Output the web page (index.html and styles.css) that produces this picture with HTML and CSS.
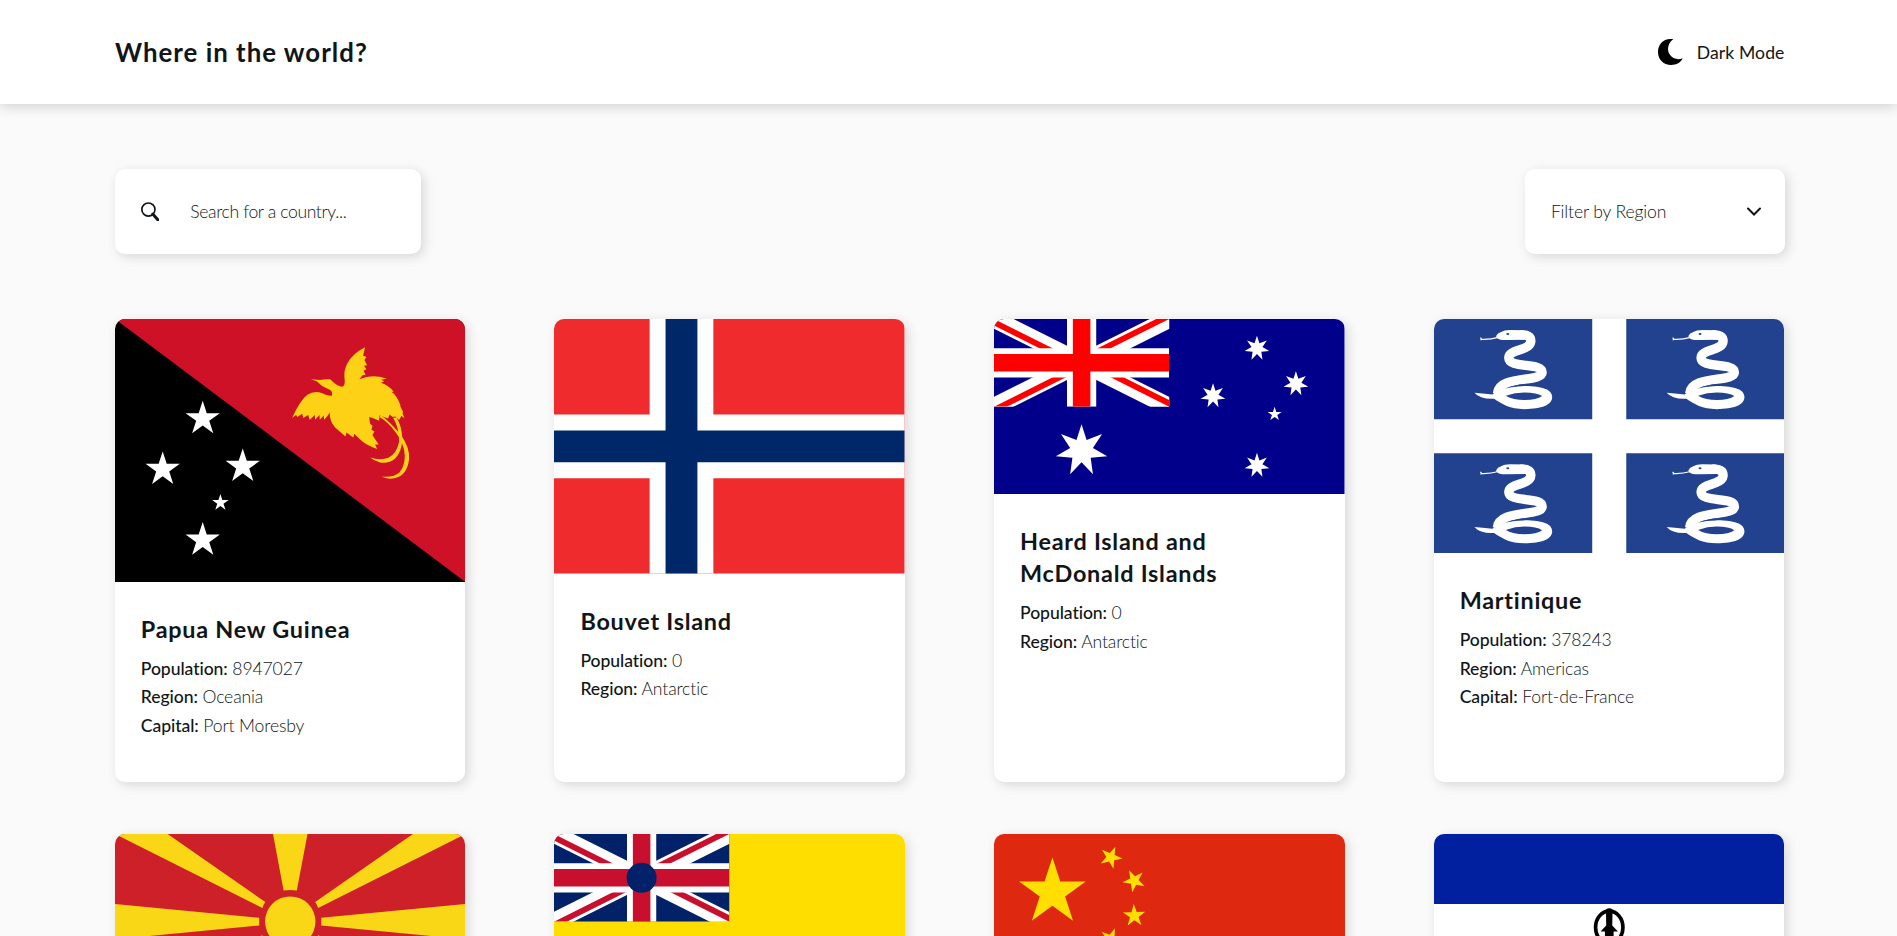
FILE: index.html
```html
<!DOCTYPE html>
<html lang="en">
<head>
<meta charset="utf-8">
<title>Where in the world?</title>
<link rel="stylesheet" href="styles.css">
</head>
<body>
<svg class="defs" aria-hidden="true">
  <defs>
    <polygon id="star5" points="0,-1 .2245,-.309 .951,-.309 .363,.118 .588,.809 0,.382 -.588,.809 -.363,.118 -.951,-.309 -.2245,-.309"/>
    <polygon id="star7" points="0,-1 .193,-.4 .782,-.623 .433,-.099 .975,.223 .347,.277 .434,.901 0,.444 -.434,.901 -.347,.277 -.975,.223 -.433,-.099 -.782,-.623 -.193,-.4"/>
    <clipPath id="saltire"><path d="M30,15h30v15zM30,15v15H0zM30,15H0V0zM30,15V0h30z"/></clipPath>
    <clipPath id="canton"><path d="M0,0h60v30H0z"/></clipPath>
    <g id="union" clip-path="url(#canton)">
      <path d="M0,0L60,30M60,0L0,30" stroke="#fff" stroke-width="6"/>
      <path d="M0,0L60,30M60,0L0,30" stroke="currentColor" stroke-width="4" clip-path="url(#saltire)"/>
      <path d="M30,0v30M0,15h60" stroke="#fff" stroke-width="10"/>
      <path d="M30,0v30M0,15h60" stroke="currentColor" stroke-width="6"/>
    </g>
    <g id="snake">
      <path d="M300,75C322,73 333,80 332,94C330,123 266,117 266,143C266,176 366,156 366,187C365,218 236,194 232,250" fill="none" stroke="#fff" stroke-width="28"/>
      <path d="M228,78Q232,69 243,66Q252,60 270,60L312,61L314,89L262,90Q240,91 234,86Q228,83 228,78z" fill="#fff"/>
      <path d="M163,248Q185,250 217,253C235,238 270,228 313,228C370,228 396,240 396,261C396,285 365,297 313,297C270,297 245,282 222,266Q180,268 163,248z" fill="#fff"/>
      <path d="M257,257Q285,247 313,247Q350,247 366,258Q350,270 313,270Q280,270 257,257zM255,237Q275,226 312,222L312,228Q275,229 255,237z" fill="#22428f"/>
      <path d="M181,83L185,88L181,90L185,88Q210,89 235,82" fill="none" stroke="#fff" stroke-width="3.500"/>
      <ellipse cx="263" cy="72" rx="4.500" ry="3" fill="#22428f"/>
    </g>
  </defs>
</svg>

<header class="header">
  <h1 class="logo">Where in the world?</h1>
  <button class="mode" type="button">
    <svg class="moon" viewBox="0 0 75 78"><path d="M46,1C18,-4 0,15 0,39C0,62 17,78 39,78C55,78 69,71 74,58C49,67 31,50 30,31C30,18 36,7 46,1z"/></svg>
    <span>Dark Mode</span>
  </button>
</header>

<main class="main">
  <div class="controls">
    <label class="search">
      <svg class="search-icon" viewBox="0 0 55 58"><circle cx="22" cy="22.500" r="19.500" fill="none" stroke="#111517" stroke-width="5"/><path d="M35,36L50,53" fill="none" stroke="#111517" stroke-width="9" stroke-linecap="round"/></svg>
      <span>Search for a country...</span>
    </label>
    <div class="filter">
      <span>Filter by Region</span>
      <svg class="chevron" viewBox="0 0 42 26"><path d="M3,4L21,22L39,4" fill="none" stroke="#111517" stroke-width="6" stroke-linecap="round" stroke-linejoin="miter"/></svg>
    </div>
  </div>

  <section class="grid">
    <article class="card">
      <svg class="flag" viewBox="45 27 1051 788.500">
        <path d="M45,27h1051v789H45z" fill="#000"/>
        <path d="M45,27h1051v789z" fill="#ce1126"/>
        <g fill="#fff">
          <use href="#star5" transform="translate(308 326) scale(54)"/>
          <use href="#star5" transform="translate(188 478) scale(54)"/>
          <use href="#star5" transform="translate(428 469) scale(54)"/>
          <use href="#star5" transform="translate(361 578) scale(26)"/>
          <use href="#star5" transform="translate(308 690) scale(54)"/>
        </g>
        <g transform="translate(540 75)" fill="#fcd116">
          <path d="M92,133L120,135Q135,131 150,133L160,142Q172,154 187,155Q194,152 194,138Q189,108 202,85Q217,56 255,37L249,62L259,66L253,75L261,91L252,92L259,103L250,107L257,119L248,120L238,133Q275,116 320,131L303,134L312,139L303,143Q325,150 341,170L334,170Q350,180 362,213L359,211L369,231L367,234L373,250L364,242L357,255L345,244L338,246L328,238L324,250L298,241L297,257L281,250L267,246L270,266L277,272L274,284L283,289L277,300L286,314L296,328L285,328L291,342Q262,332 245,318L222,296L220,307L213,303L199,292L196,304Q180,290 165,277Q148,258 149,232Q143,243 132,254L131,241L119,254L118,240L105,254L104,240L89,254L84,240L70,249L66,236L52,246L48,240L36,249Q60,195 82,179Q102,166 125,174Q145,184 155,182Q158,170 150,165L126,153L110,139z"/>
          <path d="M303,241Q330,260 360,297Q389,335 387,372Q380,430 330,431Q315,430 304,424Q340,428 358,412Q380,385 372,345Q365,315 345,290Q325,262 298,246zM349,247Q364,270 367,310Q365,350 345,370Q325,387 300,382Q282,377 270,367Q300,377 325,368Q350,355 357,320Q358,280 339,248z"/>
        </g>
      </svg>
      <div class="body">
        <h2 class="name">Papua New Guinea</h2>
        <p class="fact"><b>Population:</b> 8947027</p>
        <p class="fact"><b>Region:</b> Oceania</p>
        <p class="fact"><b>Capital:</b> Port Moresby</p>
      </div>
    </article>

    <article class="card">
      <svg class="flag" viewBox="42 27 1053 765">
        <path d="M42,27h1053v765H42z" fill="#ef2b2d"/>
        <path d="M425,27v765M42,409.500h1053" stroke="#fff" stroke-width="191.500"/>
        <path d="M425,27v765M42,409.500h1053" stroke="#002868" stroke-width="95.700"/>
      </svg>
      <div class="body">
        <h2 class="name">Bouvet Island</h2>
        <p class="fact"><b>Population:</b> 0</p>
        <p class="fact"><b>Region:</b> Antarctic</p>
      </div>
    </article>

    <article class="card">
      <svg class="flag" viewBox="42 27 1053 526.500">
        <path d="M42,27h1053v527H42z" fill="#00008b"/>
        <use href="#union" color="#f00" transform="translate(42 27) scale(8.775)"/>
        <g fill="#fff">
          <use href="#star7" transform="translate(305 422) scale(79)"/>
          <use href="#star7" transform="translate(832 115) scale(38)"/>
          <use href="#star7" transform="translate(700 258) scale(38)"/>
          <use href="#star7" transform="translate(949 222) scale(38)"/>
          <use href="#star7" transform="translate(832 467) scale(38)"/>
          <use href="#star5" transform="translate(885 313) scale(22)"/>
        </g>
      </svg>
      <div class="body">
        <h2 class="name">Heard Island and<br>McDonald Islands</h2>
        <p class="fact"><b>Population:</b> 0</p>
        <p class="fact"><b>Region:</b> Antarctic</p>
      </div>
    </article>

    <article class="card">
      <svg class="flag" viewBox="42 27 1050 702">
        <path d="M42,27h1050v702H42z" fill="#22428f"/>
        <path d="M567,27v702M42,378h1050" stroke="#fff" stroke-width="102"/>
        <use href="#snake"/>
        <use href="#snake" x="576"/>
        <use href="#snake" y="402"/>
        <use href="#snake" x="576" y="402"/>
      </svg>
      <div class="body">
        <h2 class="name">Martinique</h2>
        <p class="fact"><b>Population:</b> 378243</p>
        <p class="fact"><b>Region:</b> Americas</p>
        <p class="fact"><b>Capital:</b> Fort-de-France</p>
      </div>
    </article>

    <article class="card">
      <svg class="flag" viewBox="0 0 350.500 175.250">
        <path d="M0,0h351v176H0z" fill="#ce2028"/>
        <g fill="#f9d616">
          <path d="M158,0h34.500L181.800,56.500Q175.200,55.600 168.600,56.500zM158,175.250h34.500L181.800,118.800h-13.200z"/>
          <path d="M0,70L144.200,83.700v7.800L0,105.300zM350.500,70L206.300,83.700v7.800L350.500,105.300z"/>
          <path d="M0,0H52.600L150.300,68Q148.300,71 147.400,74zM350.500,0H297.900L200.200,68Q202.200,71 203.100,74z"/>
          <path d="M0,175.250H52.600L150.300,107.200Q148.300,104.200 147.400,101.200zM350.500,175.250H297.900L200.200,107.200Q202.200,104.200 203.100,101.200z"/>
          <circle cx="175.250" cy="87.600" r="25.200"/>
        </g>
      </svg>
    </article>

    <article class="card">
      <svg class="flag" viewBox="0 0 350.500 175.250">
        <path d="M0,0h351v176H0z" fill="#fedd00"/>
        <path d="M0,0h175.250v87.600H0z" fill="#012169"/>
        <use href="#union" color="#c8102e" transform="scale(2.921)"/>
        <circle cx="87.600" cy="43.800" r="15" fill="#012169"/>
      </svg>
    </article>

    <article class="card">
      <svg class="flag" viewBox="0 0 350.500 233.700">
        <path d="M0,0h351v234H0z" fill="#de2910"/>
        <g fill="#ffde00">
          <use href="#star5" transform="translate(58.400 58.400) scale(35)"/>
          <use href="#star5" transform="translate(116.800 23.400) rotate(-121) scale(11.700)"/>
          <use href="#star5" transform="translate(140.200 46.700) rotate(-98.100) scale(11.700)"/>
          <use href="#star5" transform="translate(140.200 81.800) rotate(-74) scale(11.700)"/>
          <use href="#star5" transform="translate(116.800 105.100) rotate(-51.300) scale(11.700)"/>
        </g>
      </svg>
    </article>

    <article class="card">
      <svg class="flag" viewBox="42 42 1050 700">
        <path d="M42,42h1050v700H42z" fill="#fff"/>
        <path d="M42,42h1050v210H42z" fill="#00209f"/>
        <ellipse cx="567" cy="322" rx="41" ry="49" fill="none" stroke="#000" stroke-width="11"/>
        <path d="M557,268Q567,261 577,268L576,316L593,334H580V400H554V334H541L558,316z"/>
      </svg>
    </article>
  </section>
</main>
</body>
</html>
```

FILE: styles.css
```css
* { box-sizing: border-box; margin: 0; padding: 0; }

body {
  height: 100vh;
  overflow: hidden;
  background: #fafafa;
  color: #111517;
  font-family: Lato, "Open Sans", sans-serif;
  font-size: 17.6px;
  font-variant-ligatures: none;
}

.defs { display: block; width: 0; height: 0; }

.header {
  display: flex;
  align-items: center;
  justify-content: space-between;
  height: 104px;
  padding: 0 112.500px 0 115px;
  background: #fff;
  box-shadow: 0 3px 12px rgba(0, 0, 0, .16);
}

.logo { font-size: 25.800px; font-weight: 700; letter-spacing: 1.020px; }

.mode {
  display: flex;
  align-items: center;
  gap: 14px;
  border: 0;
  background: none;
  color: inherit;
  font: inherit;
  letter-spacing: .1px;
}

.moon { width: 25px; height: 26px; }

.main { padding: 65px 112.800px 0 114.800px; }

.controls {
  display: flex;
  justify-content: space-between;
  margin: 0 -.7px 65px 0;
  font-weight: 300;
}

.search, .filter {
  display: flex;
  align-items: center;
  height: 85px;
  padding: 0 24px 0 26px;
  border-radius: 10px;
  background: #fff;
  box-shadow: 3px 3px 12px rgba(0, 0, 0, .14);
}

.search { width: 306px; gap: 31px; letter-spacing: -.38px; }
.search-icon { width: 18.500px; height: 19.500px; }
.filter { width: 260px; justify-content: space-between; letter-spacing: -.16px; }
.chevron { width: 14px; height: 9px; }

.grid {
  display: grid;
  grid-template-columns: repeat(4, 350.500px);
  justify-content: space-between;
  row-gap: 52px;
}

.card {
  min-height: 463px;
  overflow: hidden;
  border-radius: 10px;
  background: #fff;
  box-shadow: 3px 3px 12px rgba(0, 0, 0, .14);
}

.flag { display: block; width: 100%; }
.body { padding: 31px 26px; }

.name { margin-bottom: 10px; font-size: 23.400px; line-height: 32px; font-weight: 700; letter-spacing: .75px; }
.fact { line-height: 28.500px; font-weight: 300; letter-spacing: -.14px; }
.fact b { font-weight: 500; letter-spacing: -.08px; }
```
